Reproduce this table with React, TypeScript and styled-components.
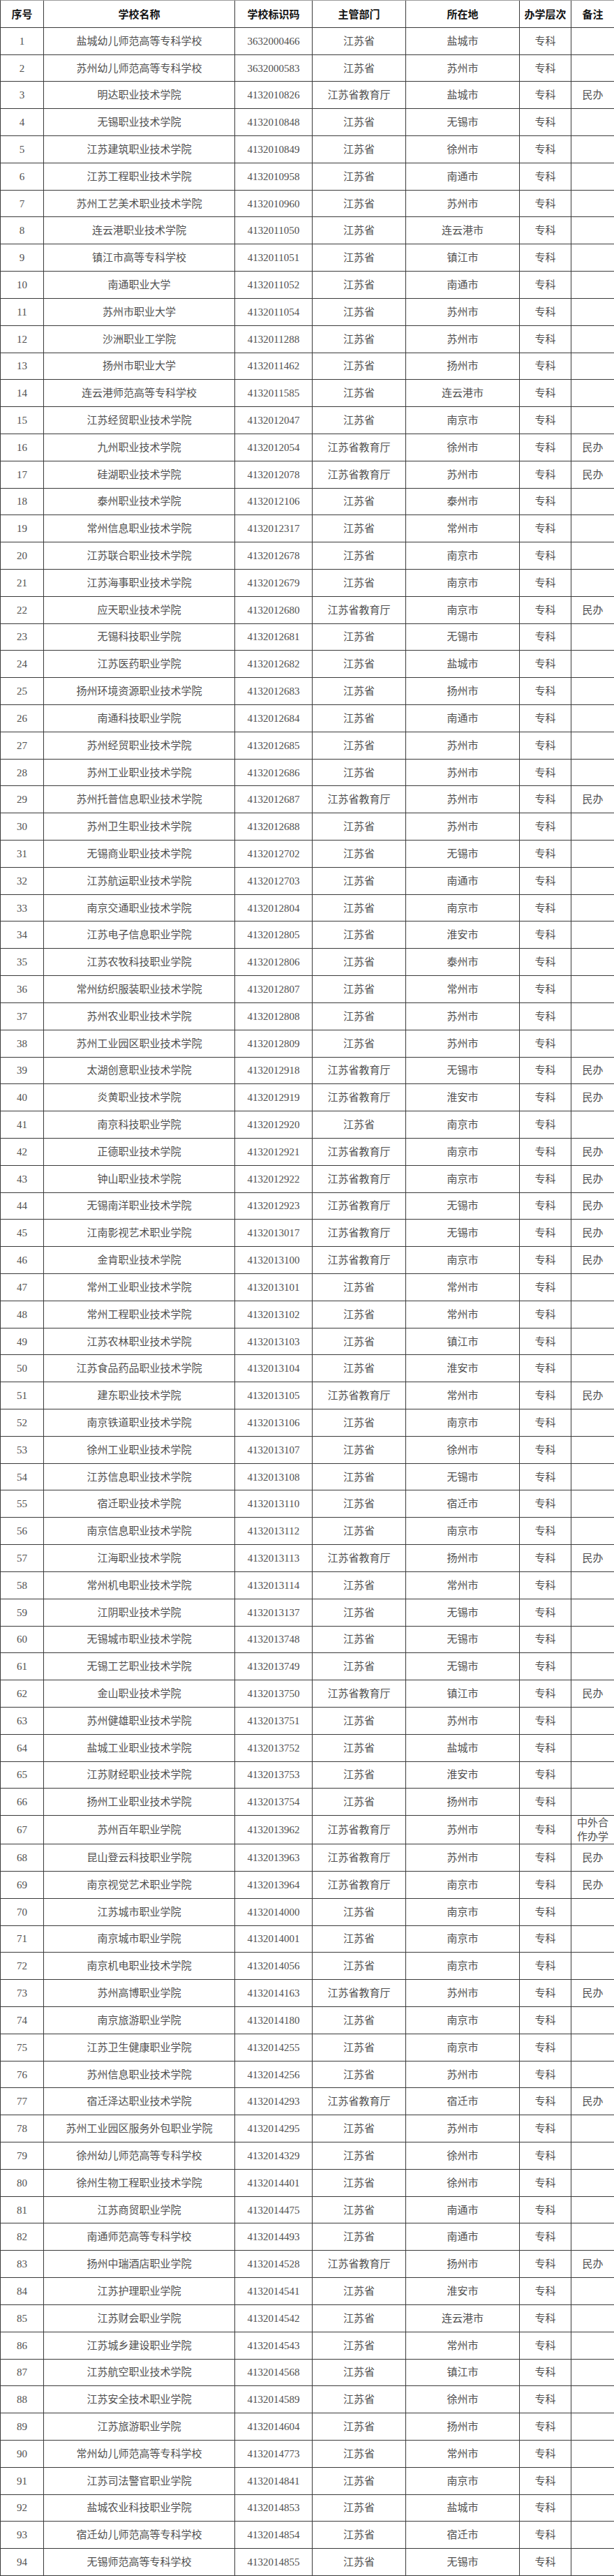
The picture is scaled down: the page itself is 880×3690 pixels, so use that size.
import styled, { createGlobalStyle } from 'styled-components'

const GlobalStyle = createGlobalStyle`
  html, body {
    margin: 0;
    padding: 0;
    background: #ffffff;
  }
  * {
    box-sizing: border-box;
  }
`

const RAW = `盐城幼儿师范高等专科学校 3632000466 省 盐城市
苏州幼儿师范高等专科学校 3632000583 省 苏州市
明达职业技术学院 4132010826 厅 盐城市 民办
无锡职业技术学院 4132010848 省 无锡市
江苏建筑职业技术学院 4132010849 省 徐州市
江苏工程职业技术学院 4132010958 省 南通市
苏州工艺美术职业技术学院 4132010960 省 苏州市
连云港职业技术学院 4132011050 省 连云港市
镇江市高等专科学校 4132011051 省 镇江市
南通职业大学 4132011052 省 南通市
苏州市职业大学 4132011054 省 苏州市
沙洲职业工学院 4132011288 省 苏州市
扬州市职业大学 4132011462 省 扬州市
连云港师范高等专科学校 4132011585 省 连云港市
江苏经贸职业技术学院 4132012047 省 南京市
九州职业技术学院 4132012054 厅 徐州市 民办
硅湖职业技术学院 4132012078 厅 苏州市 民办
泰州职业技术学院 4132012106 省 泰州市
常州信息职业技术学院 4132012317 省 常州市
江苏联合职业技术学院 4132012678 省 南京市
江苏海事职业技术学院 4132012679 省 南京市
应天职业技术学院 4132012680 厅 南京市 民办
无锡科技职业学院 4132012681 省 无锡市
江苏医药职业学院 4132012682 省 盐城市
扬州环境资源职业技术学院 4132012683 省 扬州市
南通科技职业学院 4132012684 省 南通市
苏州经贸职业技术学院 4132012685 省 苏州市
苏州工业职业技术学院 4132012686 省 苏州市
苏州托普信息职业技术学院 4132012687 厅 苏州市 民办
苏州卫生职业技术学院 4132012688 省 苏州市
无锡商业职业技术学院 4132012702 省 无锡市
江苏航运职业技术学院 4132012703 省 南通市
南京交通职业技术学院 4132012804 省 南京市
江苏电子信息职业学院 4132012805 省 淮安市
江苏农牧科技职业学院 4132012806 省 泰州市
常州纺织服装职业技术学院 4132012807 省 常州市
苏州农业职业技术学院 4132012808 省 苏州市
苏州工业园区职业技术学院 4132012809 省 苏州市
太湖创意职业技术学院 4132012918 厅 无锡市 民办
炎黄职业技术学院 4132012919 厅 淮安市 民办
南京科技职业学院 4132012920 省 南京市
正德职业技术学院 4132012921 厅 南京市 民办
钟山职业技术学院 4132012922 厅 南京市 民办
无锡南洋职业技术学院 4132012923 厅 无锡市 民办
江南影视艺术职业学院 4132013017 厅 无锡市 民办
金肯职业技术学院 4132013100 厅 南京市 民办
常州工业职业技术学院 4132013101 省 常州市
常州工程职业技术学院 4132013102 省 常州市
江苏农林职业技术学院 4132013103 省 镇江市
江苏食品药品职业技术学院 4132013104 省 淮安市
建东职业技术学院 4132013105 厅 常州市 民办
南京铁道职业技术学院 4132013106 省 南京市
徐州工业职业技术学院 4132013107 省 徐州市
江苏信息职业技术学院 4132013108 省 无锡市
宿迁职业技术学院 4132013110 省 宿迁市
南京信息职业技术学院 4132013112 省 南京市
江海职业技术学院 4132013113 厅 扬州市 民办
常州机电职业技术学院 4132013114 省 常州市
江阴职业技术学院 4132013137 省 无锡市
无锡城市职业技术学院 4132013748 省 无锡市
无锡工艺职业技术学院 4132013749 省 无锡市
金山职业技术学院 4132013750 厅 镇江市 民办
苏州健雄职业技术学院 4132013751 省 苏州市
盐城工业职业技术学院 4132013752 省 盐城市
江苏财经职业技术学院 4132013753 省 淮安市
扬州工业职业技术学院 4132013754 省 扬州市
苏州百年职业学院 4132013962 厅 苏州市 中外合作办学
昆山登云科技职业学院 4132013963 厅 苏州市 民办
南京视觉艺术职业学院 4132013964 厅 南京市 民办
江苏城市职业学院 4132014000 省 南京市
南京城市职业学院 4132014001 省 南京市
南京机电职业技术学院 4132014056 省 南京市
苏州高博职业学院 4132014163 厅 苏州市 民办
南京旅游职业学院 4132014180 省 南京市
江苏卫生健康职业学院 4132014255 省 南京市
苏州信息职业技术学院 4132014256 省 苏州市
宿迁泽达职业技术学院 4132014293 厅 宿迁市 民办
苏州工业园区服务外包职业学院 4132014295 省 苏州市
徐州幼儿师范高等专科学校 4132014329 省 徐州市
徐州生物工程职业技术学院 4132014401 省 徐州市
江苏商贸职业学院 4132014475 省 南通市
南通师范高等专科学校 4132014493 省 南通市
扬州中瑞酒店职业学院 4132014528 厅 扬州市 民办
江苏护理职业学院 4132014541 省 淮安市
江苏财会职业学院 4132014542 省 连云港市
江苏城乡建设职业学院 4132014543 省 常州市
江苏航空职业技术学院 4132014568 省 镇江市
江苏安全技术职业学院 4132014589 省 徐州市
江苏旅游职业学院 4132014604 省 扬州市
常州幼儿师范高等专科学校 4132014773 省 常州市
江苏司法警官职业学院 4132014841 省 南京市
盐城农业科技职业学院 4132014853 省 盐城市
宿迁幼儿师范高等专科学校 4132014854 省 宿迁市
无锡师范高等专科学校 4132014855 省 无锡市`

interface School {
  name: string
  code: string
  dept: string
  city: string
  note: string
}

const schools: School[] = RAW.split('\n').map((line) => {
  const [name, code, dept, city, note = ''] = line.trim().split(' ')
  return {
    name,
    code,
    dept: dept === '厅' ? '江苏省教育厅' : '江苏省',
    city,
    note,
  }
})

const headers = ['序号', '学校名称', '学校标识码', '主管部门', '所在地', '办学层次', '备注']

const Table = styled.div<{ rows: number }>`
  display: grid;
  grid-template-columns: 62px 274px 111px 134px 163px 74px 62px;
  grid-template-rows: repeat(${({ rows }) => rows}, 1fr);
  width: 880px;
  height: 3690px;
  border-left: 1px solid #3a3a3a;
  border-top: 1px solid #9a9a9a;
`

const HeadCell = styled.div`
  display: flex;
  align-items: center;
  justify-content: center;
  border-right: 1px solid #3a3a3a;
  border-bottom: 1px solid #3a3a3a;
  font-family: 'Noto Sans CJK SC', 'Liberation Sans', sans-serif;
  font-size: 15px;
  font-weight: 700;
  color: #141414;
  white-space: nowrap;
`

const Cell = styled.div<{ wrap?: boolean }>`
  display: flex;
  align-items: center;
  justify-content: center;
  padding: 0 4px;
  border-right: 1px solid #3a3a3a;
  border-bottom: 1px solid #3a3a3a;
  font-family: 'Liberation Serif', 'Noto Sans CJK SC', serif;
  font-size: 15px;
  line-height: ${({ wrap }) => (wrap ? '20px' : '1.2')};
  color: #505050;
  text-align: center;
  white-space: ${({ wrap }) => (wrap ? 'normal' : 'nowrap')};
  overflow: visible;
`

export default function App() {
  return (
    <>
      <GlobalStyle />
      <Table rows={schools.length + 1}>
        {headers.map((h) => (
          <HeadCell key={h}>{h}</HeadCell>
        ))}
        {schools.map((s, i) => [
          <Cell key={`n${i}`}>{i + 1}</Cell>,
          <Cell key={`a${i}`}>{s.name}</Cell>,
          <Cell key={`c${i}`}>{s.code}</Cell>,
          <Cell key={`d${i}`}>{s.dept}</Cell>,
          <Cell key={`l${i}`}>{s.city}</Cell>,
          <Cell key={`t${i}`}>专科</Cell>,
          <Cell key={`r${i}`} wrap={s.note.length > 2}>
            {s.note}
          </Cell>,
        ])}
      </Table>
    </>
  )
}
